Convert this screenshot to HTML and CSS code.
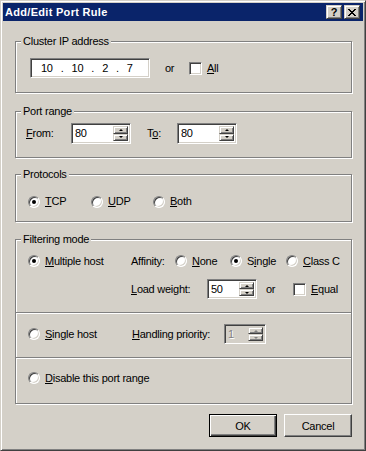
FILE: index.html
```html
<!DOCTYPE html>
<html lang="en">
<head>
  <meta charset="UTF-8" />
  <meta name="viewport" content="width=device-width, initial-scale=1.0">
  <title>Add/Edit Port Rule</title>
  <link rel="stylesheet" href="styles.css">
</head>
<body>

  <div class="window">
    <div class="titlebar">
      <span class="title">Add/Edit Port Rule</span>
      <div class="caption-btns">
        <button class="cap-btn">?</button>
        <button class="cap-btn">
          <svg width="8" height="7" viewBox="0 0 8 7" shape-rendering="crispEdges">
            <path d="M0 0h2v1H0zM6 0h2v1H6zM1 1h2v1H1zM5 1h2v1H5zM2 2h4v1H2zM3 3h2v1H3zM2 4h4v1H2zM1 5h2v1H1zM5 5h2v1H5zM0 6h2v1H0zM6 6h2v1H6z" fill="#000"/>
          </svg>
        </button>
      </div>
    </div>

    <div class="dialog">

      <div class="group group-ip">
        <div class="group-title">Cluster IP address</div>
        <div class="row row-ip">
          <div class="ip-field">
            <span>10</span><span class="ip-dot">.</span><span>10</span><span class="ip-dot">.</span><span>2</span><span class="ip-dot">.</span><span>7</span>
          </div>
          <span class="or-text">or</span>
          <label class="check"><span class="box"></span><span><u>A</u>ll</span></label>
        </div>
      </div>

      <div class="group group-ports">
        <div class="group-title">Port range</div>
        <div class="row row-ports">
          <span class="lbl-from"><u>F</u>rom:</span>
          <div class="spin spin-port">
            <span class="spin-value">80</span>
            <span class="spin-btns"><span class="spin-btn up"></span><span class="spin-btn down"></span></span>
          </div>
          <span class="lbl-to">T<u>o</u>:</span>
          <div class="spin spin-port">
            <span class="spin-value">80</span>
            <span class="spin-btns"><span class="spin-btn up"></span><span class="spin-btn down"></span></span>
          </div>
        </div>
      </div>

      <div class="group group-proto">
        <div class="group-title">Protocols</div>
        <div class="row row-proto">
          <label class="opt opt-tcp"><span class="radio checked"></span><span><u>T</u>CP</span></label>
          <label class="opt opt-udp"><span class="radio"></span><span><u>U</u>DP</span></label>
          <label class="opt"><span class="radio"></span><span><u>B</u>oth</span></label>
        </div>
      </div>

      <div class="group group-filter">
        <div class="group-title">Filtering mode</div>

        <div class="section section-multi">
          <div class="row row-multi">
            <label class="opt opt-multi"><span class="radio checked"></span><span><u>M</u>ultiple host</span></label>
            <span class="affinity-lbl">Affinity:</span>
            <label class="opt opt-none"><span class="radio"></span><span><u>N</u>one</span></label>
            <label class="opt opt-single"><span class="radio checked"></span><span>S<u>i</u>ngle</span></label>
            <label class="opt"><span class="radio"></span><span><u>C</u>lass C</span></label>
          </div>
          <div class="row row-load">
            <span class="load-lbl"><u>L</u>oad weight:</span>
            <div class="spin spin-load">
              <span class="spin-value">50</span>
              <span class="spin-btns"><span class="spin-btn up"></span><span class="spin-btn down"></span></span>
            </div>
            <span class="or-load">or</span>
            <label class="check"><span class="box"></span><span><u>E</u>qual</span></label>
          </div>
        </div>

        <div class="section section-single">
          <div class="row row-single">
            <label class="opt opt-single-host"><span class="radio"></span><span><u>S</u>ingle host</span></label>
            <span class="prio-lbl"><u>H</u>andling priority:</span>
            <div class="spin spin-prio disabled">
              <span class="spin-value">1</span>
              <span class="spin-btns"><span class="spin-btn up"></span><span class="spin-btn down"></span></span>
            </div>
          </div>
        </div>

        <div class="section section-disable">
          <div class="row row-disable">
            <label class="opt"><span class="radio"></span><span><u>D</u>isable this port range</span></label>
          </div>
        </div>
      </div>

      <div class="actions">
        <button class="btn btn-default">OK</button>
        <button class="btn">Cancel</button>
      </div>

    </div>
  </div>

</body>
</html>
```

FILE: styles.css
```css
* {
  box-sizing: border-box;
}

body {
  margin: 0;
  background: #d4d0c8;
  color: #000;
  font-family: "Liberation Sans", Arial, sans-serif;
  font-size: 11px;
  line-height: 13px;
  letter-spacing: -0.25px;
}

u {
  text-decoration: underline;
}

/* window frame */
.window {
  width: 366px;
  height: 451px;
  padding: 2px;
  background: #d4d0c8;
  border: 1px solid;
  border-color: #d4d0c8 #404040 #404040 #d4d0c8;
  box-shadow: inset 1px 1px #fff, inset -1px -1px #808080;
  display: flex;
  flex-direction: column;
}

.titlebar {
  height: 18px;
  padding: 0 3px 0 2px;
  background: #0a246a;
  color: #fff;
  display: flex;
  align-items: center;
  justify-content: space-between;
}

.title {
  font-weight: bold;
  letter-spacing: 0.3px;
}

.caption-btns {
  display: flex;
  gap: 2px;
}

.cap-btn {
  width: 16px;
  height: 14px;
  padding: 0;
  margin: 0;
  background: #d4d0c8;
  border: 1px solid;
  border-color: #d4d0c8 #404040 #404040 #d4d0c8;
  box-shadow: inset 1px 1px #fff, inset -1px -1px #808080;
  font-family: "Liberation Sans", Arial, sans-serif;
  font-size: 11px;
  font-weight: bold;
  line-height: 10px;
  color: #000;
  display: flex;
  align-items: center;
  justify-content: center;
}

.dialog {
  flex: 1;
  padding: 20px 11px 11px 12px;
  display: flex;
  flex-direction: column;
}

/* group boxes */
.group {
  border: 1px solid #808080;
  box-shadow: inset 1px 1px #fff, 1px 1px #fff;
}

.group-title {
  display: table;
  margin: -7px 0 0 5px;
  padding: 0 2px;
  background: #d4d0c8;
}

.group-ip {
  padding-bottom: 14px;
}

.group-ports {
  margin-top: 18px;
  padding-bottom: 13px;
}

.group-proto {
  margin-top: 16px;
  padding-bottom: 13px;
}

.group-filter {
  margin-top: 17px;
}

.section + .section {
  border-top: 1px solid #808080;
  box-shadow: inset 0 1px #fff;
}

.section-multi {
  padding: 7px 0 13px;
}

.section-single {
  padding: 11px 0 13px;
}

.section-disable {
  padding: 12px 0 17px;
}

.row {
  display: flex;
  align-items: center;
}

.row-ip {
  height: 20px;
  margin-top: 10px;
  padding-left: 14px;
}

.row-ports {
  height: 21px;
  margin-top: 5px;
  padding-left: 10px;
}

.row-proto {
  height: 13px;
  margin-top: 14px;
  padding-left: 12px;
}

.row-multi {
  height: 16px;
  padding-left: 12px;
}

.row-load {
  height: 20px;
  margin-top: 10px;
  padding-left: 115px;
}

.row-single {
  height: 20px;
  padding-left: 12px;
}

.row-disable {
  height: 16px;
  padding-left: 12px;
}

/* sunken fields */
.ip-field,
.spin,
.box {
  background: #fff;
  border: 1px solid;
  border-color: #808080 #fff #fff #808080;
  box-shadow: inset 1px 1px #404040, inset -1px -1px #d4d0c8;
}

.ip-field {
  width: 120px;
  height: 20px;
  padding-left: 10px;
  display: flex;
  align-items: center;
}

.ip-dot {
  margin: 0 8px;
}

.or-text {
  width: 24px;
  margin-left: 15px;
}

.check {
  display: flex;
  align-items: center;
  gap: 5px;
}

.box {
  width: 13px;
  height: 13px;
}

.lbl-from {
  width: 45px;
}

.lbl-to {
  width: 30px;
  margin-left: 16px;
}

/* spin boxes */
.spin {
  height: 21px;
  padding: 2px;
  display: flex;
}

.spin-port {
  width: 60px;
}

.spin-load {
  width: 50px;
  height: 20px;
}

.spin-prio {
  width: 42px;
  height: 20px;
}

.spin-value {
  flex: 1;
  padding-left: 1px;
  align-self: center;
}

.spin-btns {
  width: 15px;
  display: flex;
  flex-direction: column;
}

.spin-btn {
  flex: 1;
  background: #d4d0c8;
  border: 1px solid;
  border-color: #d4d0c8 #404040 #404040 #d4d0c8;
  box-shadow: inset 1px 1px #fff, inset -1px -1px #808080;
  display: flex;
  align-items: center;
  justify-content: center;
}

.spin-btn::after {
  content: "";
  border-left: 2px solid transparent;
  border-right: 2px solid transparent;
}

.up::after {
  border-bottom: 2px solid #000;
}

.down::after {
  border-top: 2px solid #000;
}

.spin.disabled {
  background: #d4d0c8;
  color: #808080;
}

.spin.disabled .spin-value {
  text-shadow: 1px 1px #fff;
}

.spin.disabled .up::after {
  border-bottom-color: #808080;
}

.spin.disabled .down::after {
  border-top-color: #808080;
}

/* radio buttons */
.opt {
  display: flex;
  align-items: center;
  gap: 5px;
}

.radio {
  width: 12px;
  height: 12px;
  border-radius: 50%;
  background: #fff;
  border: 1px solid;
  border-color: #808080 #fff #fff #808080;
  box-shadow: inset 1px 1px #404040, inset -1px -1px #d4d0c8;
  display: flex;
  align-items: center;
  justify-content: center;
}

.radio.checked::after {
  content: "";
  width: 4px;
  height: 4px;
  border-radius: 50%;
  background: #000;
}

.opt-tcp {
  width: 63px;
}

.opt-udp {
  width: 62px;
}

.opt-multi {
  width: 103px;
}

.affinity-lbl {
  width: 44px;
}

.opt-none {
  width: 55px;
}

.opt-single {
  width: 56px;
}

.load-lbl {
  width: 76px;
}

.or-load {
  width: 27px;
  margin-left: 9px;
}

.opt-single-host {
  width: 104px;
}

.prio-lbl {
  width: 92px;
}

/* buttons */
.actions {
  margin-top: 10px;
  display: flex;
  justify-content: flex-end;
  gap: 7px;
}

.btn {
  width: 68px;
  height: 23px;
  padding: 0;
  margin: 0;
  background: #d4d0c8;
  color: #000;
  font-family: "Liberation Sans", Arial, sans-serif;
  font-size: 11px;
  letter-spacing: -0.25px;
  border: 1px solid;
  border-color: #fff #404040 #404040 #fff;
  box-shadow: inset -1px -1px #808080;
}

.btn-default {
  border-color: #000;
  box-shadow: inset 1px 1px #fff, inset -1px -1px #404040, inset -2px -2px #808080;
}
```
